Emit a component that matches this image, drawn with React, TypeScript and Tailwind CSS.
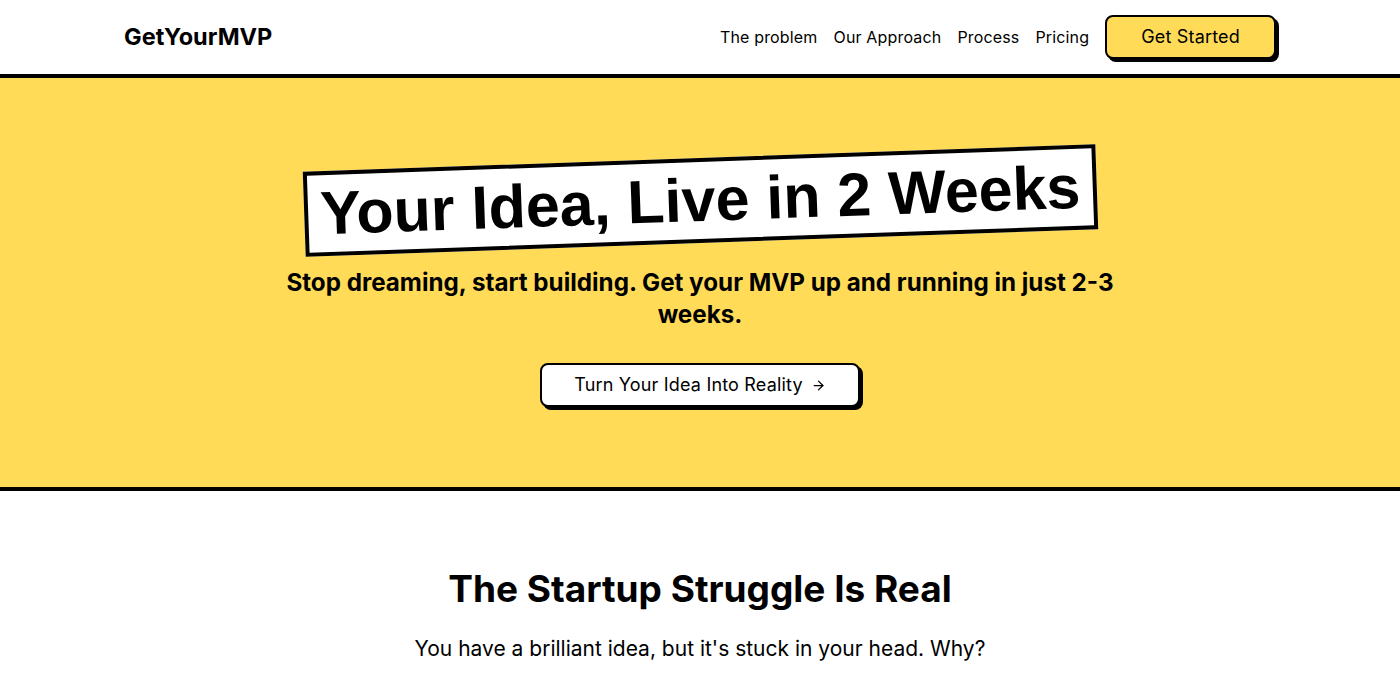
import { ArrowRight } from 'lucide-react'

// ランディングページのヘッダーとヒーロー

const nav = ['The problem', 'Our Approach', 'Process', 'Pricing']

export default function App() {
  return (
    <div className="min-h-screen bg-white text-black font-['Inter','Liberation_Sans',sans-serif]">
      <header className="border-b-4 border-black bg-white">
        <div className="max-w-6xl mx-auto h-[74px] flex items-center justify-between">
          <a className="text-[23.5px] font-bold">GetYourMVP</a>
          <nav className="flex items-center gap-4 text-base tracking-[0.01em]">
            {nav.map((n) => (
              <a key={n} className="cursor-pointer">
                {n}
              </a>
            ))}
            <button className="px-[34px] h-11 text-lg tracking-[0.01em] bg-[#FFDB58] border-2 border-black rounded-lg shadow-[3px_3px_0_0_#000]">
              Get Started
            </button>
          </nav>
        </div>
      </header>

      <section className="bg-[#FFDB58] border-b-4 border-black pt-20 pb-20">
        <div className="flex flex-col items-center text-center">
          <h1 className="-rotate-2 bg-white border-4 border-black px-3 py-2 text-[61px] leading-none font-bold font-['Liberation_Sans',Arial,sans-serif]">
            Your Idea, Live in 2 Weeks
          </h1>
          <p className="mt-6 max-w-4xl text-[24.2px] leading-8 font-bold">
            Stop dreaming, start building. Get your MVP up and running in just 2-3 weeks.
          </p>
          <button className="mt-8 flex items-center gap-2 px-8 h-11 text-lg tracking-[0.01em] bg-white border-2 border-black rounded-lg shadow-[3px_3px_0_0_#000]">
            Turn Your Idea Into Reality
            <ArrowRight size={15} strokeWidth={2} />
          </button>
        </div>
      </section>

      <section className="pt-[70px] pb-8">
        <div className="max-w-4xl mx-auto text-center">
          <h2 className="text-[37px] font-bold">The Startup Struggle Is Real</h2>
          <p className="mt-4 text-[21px]">You have a brilliant idea, but it's stuck in your head. Why?</p>
        </div>
      </section>
    </div>
  )
}
